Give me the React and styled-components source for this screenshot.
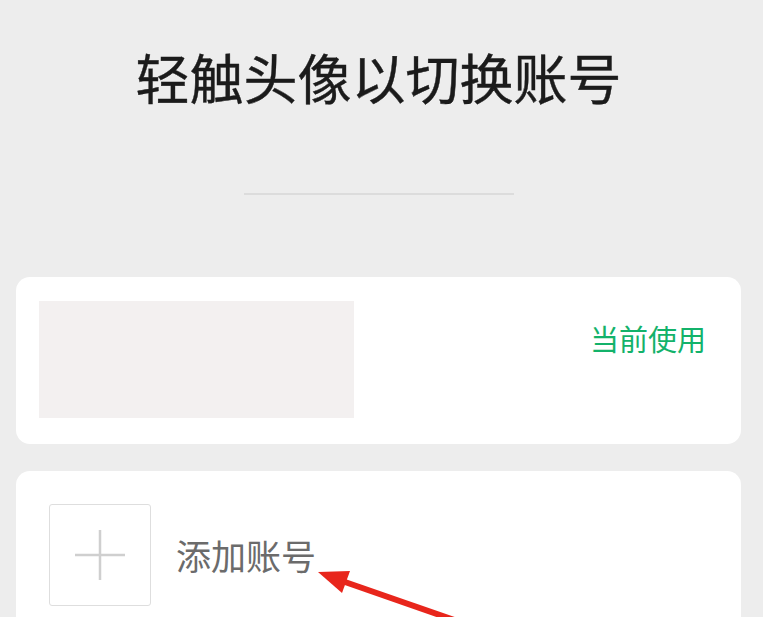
import styled, { createGlobalStyle } from "styled-components";

const GlobalStyle = createGlobalStyle`
    html, body {
        margin: 0;
        padding: 0;
        background: #ededed;
        font-family: "Noto Sans CJK SC", "Noto Sans", sans-serif;
    }
`

const Page = styled.div`
    position: relative;
    height: 617px;
    padding: 0 22px 0 16px;
    overflow: hidden;
`

const Header = styled.div`
    display: flex;
    flex-direction: column;
    align-items: center;
    padding-top: 45px;
`

const Title = styled.h1`
    margin: 0;
    font-size: 54px;
    line-height: 64px;
    font-weight: 400;
    color: #1b1b1b;
    -webkit-text-stroke: 0.4px #1b1b1b;
`

const Divider = styled.div`
    width: 270px;
    height: 2px;
    margin-top: 84px;
    background: #dcdcdc;
`

const List = styled.div`
    display: flex;
    flex-direction: column;
    gap: 27px;
    margin-top: 82px;
`

const Card = styled.div`
    display: flex;
    align-items: ${p => p.$center ? "center" : "flex-start"};
    justify-content: space-between;
    background: #fff;
    border-radius: 14px;
    padding: ${p => p.$pad};
    min-height: ${p => p.$h || 0}px;
    box-sizing: border-box;
`

const Avatar = styled.div`
    width: 315px;
    height: 117px;
    background: #f3f0f0;
`

const Current = styled.span`
    margin-top: 20px;
    font-size: 29px;
    line-height: 34px;
    color: #13b26a;
`

const AddRow = styled.div`
    display: flex;
    align-items: center;
    gap: 25px;
`

const PlusBox = styled.div`
    width: 100px;
    height: 100px;
    border: 1px solid #dedede;
    border-radius: 3px;
    display: flex;
    align-items: center;
    justify-content: center;
`

const AddText = styled.span`
    font-size: 35px;
    line-height: 40px;
    color: #6b6b6b;
`

const Arrow = styled.svg`
    position: absolute;
    left: 300px;
    top: 555px;
`

const App = () => {
    return (
        <>
            <GlobalStyle />
            <Page>
                <Header>
                    <Title>轻触头像以切换账号</Title>
                    <Divider />
                </Header>
                <List>
                    <Card $pad="24px 35px 26px 23px" $h={167}>
                        <Avatar />
                        <Current>当前使用</Current>
                    </Card>
                    <Card $pad="33px 33px" $h={180}>
                        <AddRow>
                            <PlusBox>
                                <svg width="54" height="54" viewBox="0 0 54 54">
                                    <path d="M27 2v50M2 27h50" stroke="#cfcfcf" strokeWidth="2.5" fill="none" />
                                </svg>
                            </PlusBox>
                            <AddText>添加账号</AddText>
                        </AddRow>
                    </Card>
                </List>
                <Arrow width="220" height="80" viewBox="0 0 220 80">
                    <path d="M45 27 L180 74" stroke="#e8261c" strokeWidth="6" fill="none" />
                    <polygon points="18,17 50,16 42,38" fill="#e8261c" />
                </Arrow>
            </Page>
        </>
    )
}

export default App
